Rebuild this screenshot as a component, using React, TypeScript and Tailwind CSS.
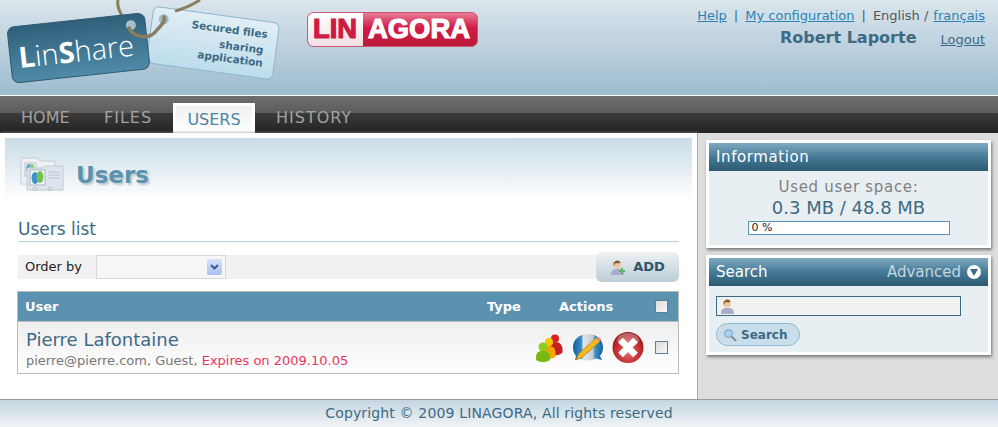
function LogoTags() {
  return (
    <svg width="285" height="95" viewBox="0 0 285 95" className="shrink-0">
      <defs>
        <linearGradient id="tagDark" x1="0" y1="0" x2="0" y2="1">
          <stop offset="0" stopColor="#30607a" />
          <stop offset="1" stopColor="#4f8aa8" />
        </linearGradient>
        <linearGradient id="tagLight" x1="0" y1="0" x2="0" y2="1">
          <stop offset="0" stopColor="#e2eef5" />
          <stop offset="1" stopColor="#bcdcec" />
        </linearGradient>
      </defs>
      <path d="M118 0 C117 6 119 10 122 16" fill="none" stroke="#8a7d60" strokeWidth="3" />
      <g transform="rotate(7.7 213 43)">
        <rect x="149.5" y="14.5" width="127" height="57" rx="6" fill="url(#tagLight)" stroke="#8ab8cf" strokeWidth="1" />
        <circle cx="161" cy="26" r="5" fill="#9db8c6" />
        <g fill="#3d6a84" fontFamily="'DejaVu Sans', sans-serif" fontWeight="700" fontSize="10.5" textAnchor="end">
          <text x="266" y="31">Secured files</text>
          <text x="264" y="47">sharing</text>
          <text x="265" y="60">application</text>
        </g>
      </g>
      <g transform="rotate(-6.2 78.5 48)">
        <rect x="9.5" y="20" width="138" height="56" rx="7" fill="url(#tagDark)" stroke="#2e5a72" strokeWidth="1" />
        <circle cx="133" cy="31" r="5" fill="#a8c0cc" />
        <text x="18" y="61.5" fill="#fff" fontFamily="'Open Sans', sans-serif" fontWeight="300" fontSize="29">
          <tspan fontWeight="700">L</tspan>in<tspan fontWeight="700">S</tspan>hare
        </text>
      </g>
      <path d="M129 28 C134 38 150 40 157 30 C160 26 166 22 164 17" fill="none" stroke="#8a7d60" strokeWidth="3.5" strokeLinecap="round" />
      <path d="M175 11 C183 9 192 5 200 0" fill="none" stroke="#8a7d60" strokeWidth="3" />
    </svg>
  )
}

function LinagoraLogo() {
  return (
    <svg width="171" height="36" viewBox="0 0 171 36">
      <defs>
        <linearGradient id="redBg" x1="0" y1="0" x2="0" y2="1">
          <stop offset="0" stopColor="#ea7d98" />
          <stop offset="0.45" stopColor="#d01c47" />
          <stop offset="1" stopColor="#bb1a3a" />
        </linearGradient>
        <linearGradient id="whiteBg" x1="0" y1="0" x2="0" y2="1">
          <stop offset="0" stopColor="#fff" />
          <stop offset="1" stopColor="#f1dfe4" />
        </linearGradient>
      </defs>
      <rect x="0.5" y="0.5" width="170" height="34" rx="6" fill="url(#redBg)" stroke="#c85a75" />
      <path d="M6.5 1 H56 V34 H6.5 A5.5 5.5 0 0 1 1 28.5 V6.5 A5.5 5.5 0 0 1 6.5 1 Z" fill="url(#whiteBg)" />
      <g fontFamily="'Liberation Sans', sans-serif" fontWeight="700" fontSize="28">
        <text x="6" y="26" fill="#cf1a45" stroke="#cf1a45" strokeWidth="1.2" textLength="44" lengthAdjust="spacingAndGlyphs">LIN</text>
        <text x="61" y="26" fill="#fff" stroke="#fff" strokeWidth="1.2" textLength="102" lengthAdjust="spacingAndGlyphs">AGORA</text>
      </g>
    </svg>
  )
}

function PageIcon() {
  return (
    <svg width="44" height="36" viewBox="0 0 44 36" className="shrink-0">
      <path d="M1 1 H18 L20 4 H35 V27 H1 Z" fill="#eef1f4" stroke="#c5ccd2" />
      <rect x="5" y="6" width="11" height="13" fill="#f4f6f8" stroke="#b4c4d4" />
      <ellipse cx="9" cy="12" rx="3" ry="5" fill="#5f9ed0" />
      <ellipse cx="12" cy="12" rx="2.5" ry="5" fill="#8fcf78" />
      <path d="M7 11 H23 L25 9 H43 V33 H7 Z" fill="#dde5ee" stroke="#c0c8d0" />
      <rect x="10" y="13" width="15" height="15" fill="#f6f8fa" stroke="#aab8c8" />
      <ellipse cx="15" cy="21" rx="3.5" ry="6" fill="#3f8fcf" />
      <ellipse cx="20" cy="20" rx="3.5" ry="6" fill="#74c050" />
      <path d="M28 15 H40 M28 18 H40 M28 21 H40" stroke="#bcc8d4" strokeWidth="1.2" />
      <circle cx="15" cy="32" r="1.6" fill="#eef2f6" stroke="#99a" strokeWidth="0.6" />
      <circle cx="30" cy="32" r="1.6" fill="#eef2f6" stroke="#99a" strokeWidth="0.6" />
    </svg>
  )
}

function PersonIcon({ plus }: { plus?: boolean }) {
  return (
    <svg width="16" height="17" viewBox="0 0 16 17" className="shrink-0">
      <path d="M1 16 C1 11 3 10 7.5 10 C12 10 14 11 14 16 Z" fill="#a9adcb" />
      <circle cx="7" cy="6" r="3.6" fill="#f0c8a0" />
      <path d="M3.5 6 C3 1 10 0 10.5 4 C8 5 6 3.5 5 4.5 C4.6 5 4.5 6 4 7 Z" fill="#8a5a25" />
      {plus && <path d="M12 9 V15 M9 12 H15" stroke="#58b858" strokeWidth="2" />}
    </svg>
  )
}

function GroupIcon() {
  return (
    <svg width="28" height="28" viewBox="0 0 28 28">
      <circle cx="20" cy="4.5" r="4" fill="#d62222" />
      <path d="M15 20 C14 11 16 8 20 8 C25 8 28 11 27.5 18 C27 21 16 23 15 20 Z" fill="#c81e1e" />
      <circle cx="14" cy="8" r="4" fill="#f8c400" />
      <path d="M8 23 C8 14 10 12 14 12 C18 12 21 14 20.5 22 C20 25 9 26 8 23 Z" fill="#f0a800" />
      <circle cx="8" cy="13" r="4.5" fill="#92cc1e" />
      <path d="M1 25 C1 19 2 17 8 17 C13 17 15 19 15 25 C15 29 1 29 1 25 Z" fill="#7ab810" />
    </svg>
  )
}

function EditIcon() {
  return (
    <svg width="30" height="28" viewBox="0 0 30 28">
      <defs>
        <linearGradient id="editBg" x1="0" y1="0" x2="1" y2="0">
          <stop offset="0" stopColor="#0f5f9c" />
          <stop offset="0.28" stopColor="#3d8fc8" />
          <stop offset="0.34" stopColor="#dfe6ec" />
          <stop offset="0.66" stopColor="#c4ccd4" />
          <stop offset="0.74" stopColor="#3d8fc8" />
          <stop offset="1" stopColor="#0f5f9c" />
        </linearGradient>
      </defs>
      <path d="M15 0 C24 0 30 6 30 13 C30 18 28.5 20 27 22 L29 26 L23 24.5 C18 27 12 27 7 24.5 L2 26 L3 22 C1 19 0 17 0 13 C0 6 6 0 15 0 Z" fill="url(#editBg)" />
      <path d="M3 26 L5.5 20 L23 4 L27 7.5 L9 23.5 Z" fill="#f5b81e" stroke="#a87a10" strokeWidth="0.7" />
      <path d="M23 4 L27 7.5 L28 5 L26 3 Z" fill="#e88a8a" />
    </svg>
  )
}

function DeleteIcon() {
  return (
    <svg width="32" height="33" viewBox="0 0 32 33" className="-ml-px">
      <defs>
        <radialGradient id="delBg" cx="0.5" cy="0.62" r="0.6">
          <stop offset="0" stopColor="#e87878" />
          <stop offset="0.7" stopColor="#c02a2c" />
          <stop offset="1" stopColor="#8e1a1c" />
        </radialGradient>
      </defs>
      <circle cx="16" cy="16.5" r="15.5" fill="url(#delBg)" />
      <ellipse cx="16" cy="9" rx="11" ry="7" fill="#fff" opacity="0.3" />
      <path d="M8.5 9 L23.5 24 M23.5 9 L8.5 24" stroke="#fff" strokeWidth="6.5" />
    </svg>
  )
}

function MagnifierIcon() {
  return (
    <svg width="14" height="14" viewBox="0 0 14 14" className="shrink-0">
      <path d="M8 8 L13 13" stroke="#8a8a8a" strokeWidth="2" />
      <circle cx="5.5" cy="5.5" r="4" fill="#a8d0f0" stroke="#7aa0c0" />
    </svg>
  )
}

function Checkbox() {
  return <div className="h-[13px] w-[13px] border border-[#5d7f9b] bg-gradient-to-br from-[#dcdcdc] to-[#f8f8f8]" />
}

function PanelHeader({ children }: { children: React.ReactNode }) {
  return (
    <div className="flex h-[28px] items-center justify-between bg-gradient-to-b from-[#7faac2] via-[#467a96] to-[#2b5a72] px-[7px] text-[15px] leading-none text-white">
      {children}
    </div>
  )
}

export default function App() {
  return (
    <div className="flex h-[427px] w-[998px] flex-col overflow-hidden bg-white font-['DejaVu_Sans',sans-serif]">
      <header className="flex h-[96px] shrink-0 border-b border-white bg-gradient-to-b from-[#dbe5ec] to-[#9dbccf]">
        <LogoTags />
        <div className="ml-[22px] mt-[12px]">
          <LinagoraLogo />
        </div>
        <div className="ml-auto flex flex-col items-end pr-[13px] pt-[7px]">
          <div className="flex gap-[7px] text-[13px] leading-[18px] text-[#505a60]">
            <a className="text-[#2b83b5] underline">Help</a>
            <span className="text-[#2b6f9a]">|</span>
            <a className="text-[#2b83b5] underline">My configuration</a>
            <span>|</span>
            <span>English /</span>
            <a className="-ml-[2px] text-[#2b83b5] underline">français</a>
          </div>
          <div className="mt-[2px] flex items-center gap-[24px]">
            <span className="text-[16px] font-bold leading-[22px] text-[#3d6a84]">Robert Laporte</span>
            <a className="mt-[3px] text-[13px] leading-[18px] text-[#3d6a84] underline">Logout</a>
          </div>
        </div>
      </header>

      <nav className="flex h-[37px] shrink-0 items-end bg-[linear-gradient(#706f6f_0%,#5c5c5c_45%,#3b3b3b_47%,#222322_100%)] text-[16px] text-[#a2a2a2]">
        <a className="ml-[21px] flex h-[30px] w-[83px] items-center">HOME</a>
        <a className="flex h-[30px] w-[69px] items-center tracking-[1px]">FILES</a>
        <a className="flex h-[30px] w-[82px] items-center justify-center border-[3px] border-b-0 border-white bg-gradient-to-b from-[#f0f0f0] to-white text-[#4a85a5]">
          USERS
        </a>
        <a className="ml-[21px] flex h-[30px] items-center tracking-[1px]">HISTORY</a>
      </nav>

      <div className="flex min-h-0 flex-1">
        <main className="w-[698px] shrink-0 border-r border-[#aaa] bg-white px-[5px] pt-[5px] shadow-[1px_0_3px_#888]">
          <div className="flex h-[62px] w-[687px] items-center gap-[12px] bg-gradient-to-b from-[#c9dce6] to-white pl-[15px] pt-[12px]">
            <PageIcon />
            <h1 className="text-[23px] font-bold text-[#5a93b0] [text-shadow:2px_2px_2px_#c0c8cc]">Users</h1>
          </div>
          <div className="ml-[13px] w-[661px]">
            <h2 className="mt-[17px] h-[25px] border-b border-[#b8cfdf] text-[17px] leading-[24px] text-[#3d6a84]">Users list</h2>
            <div className="relative mt-[13px] flex h-[24px] w-[661px] items-center bg-[#f1f1f1] pl-[7px] text-[13px] text-[#222]">
              <span className="w-[71px]">Order by</span>
              <div className="flex h-[24px] w-[130px] items-center justify-end border border-[#d8d8d8] bg-[#f6f6f6] pr-[3px]">
                <span className="flex h-[16px] w-[15px] items-center justify-center rounded-[2px] bg-gradient-to-b from-[#d8e4fa] to-[#a9c0f4]">
                  <svg width="9" height="6" viewBox="0 0 9 6">
                    <path d="M1 1 L4.5 4.5 L8 1" fill="none" stroke="#3c5a8a" strokeWidth="2" />
                  </svg>
                </span>
              </div>
              <button className="absolute -top-[3px] right-0 flex h-[30px] w-[83px] items-center justify-center gap-[7px] rounded-[6px] bg-gradient-to-b from-[#eef1f3] to-[#bccdd8] text-[13px] font-bold text-[#2f566e]">
                <PersonIcon plus />
                ADD
              </button>
            </div>
            <div className="-ml-px mt-[12px] w-[662px] border border-[#bbb] text-[13px]">
              <div className="flex h-[30px] items-center border-b border-[#bbb] bg-[#5a92b0] pl-[7px] font-bold text-white">
                <span className="flex-1">User</span>
                <span className="w-[72px]">Type</span>
                <span className="w-[96px]">Actions</span>
                <span className="w-[23px]"><Checkbox /></span>
              </div>
              <div className="flex h-[51px] items-center bg-gradient-to-b from-[#eee] to-white pl-[8px]">
                <div className="flex-1 pt-[3px]">
                  <div className="text-[18px] leading-[22px] text-[#3d6a84]">Pierre Lafontaine</div>
                  <div className="mt-[1px] text-[13px] leading-[18px] text-[#777]">
                    pierre@pierre.com, Guest, <span className="text-[#f0335c]">Expires on 2009.10.05</span>
                  </div>
                </div>
                <div className="flex w-[109px] items-center gap-[10px]">
                  <GroupIcon />
                  <EditIcon />
                  <DeleteIcon />
                </div>
                <span className="ml-[11px] w-[23px]"><Checkbox /></span>
              </div>
            </div>
          </div>
        </main>

        <aside className="flex flex-1 flex-col gap-[7px] bg-[#dddddd] pl-[8px] pt-[7px]">
          <section className="w-[285px] border-[3px] border-white bg-[#e8eff3] shadow-[1px_2px_3px_#777]">
            <PanelHeader><span className="tracking-[.6px]">Information</span></PanelHeader>
            <div className="flex h-[74px] flex-col items-center pt-[7px]">
              <div className="text-[15px] leading-[18px] tracking-[.7px] text-[#808080]">Used user space:</div>
              <div className="mt-[1px] text-[18px] leading-[21px] text-[#3d6a84]">0.3 MB / 48.8 MB</div>
              <div className="mt-[3px] h-[14px] w-[202px] border border-[#5a92b0] bg-white pl-[3px] text-[11px] leading-[12px] text-[#222]">0 %</div>
            </div>
          </section>
          <section className="w-[285px] border-[3px] border-white bg-[#e8eff3] shadow-[1px_2px_3px_#777]">
            <PanelHeader>
              <span>Search</span>
              <span className="flex items-center gap-[6px] text-[#c4d6e0]">
                Advanced
                <span className="flex h-[14px] w-[14px] items-center justify-center rounded-full bg-white">
                  <svg width="8" height="7" viewBox="0 0 8 7"><path d="M0 0 H8 L4 7 Z" fill="#3d6a84" /></svg>
                </span>
              </span>
            </PanelHeader>
            <div className="h-[66px] px-[7px] pt-[10px]">
              <div className="flex h-[20px] w-[245px] items-center border border-[#3d6a84] bg-[#f1f1f1] pl-[3px]">
                <PersonIcon />
              </div>
              <button className="mt-[7px] flex h-[23px] w-[84px] items-center gap-[4px] rounded-full border border-[#8fb8d0] bg-[#c8dfeb] pl-[6px] text-[12px] font-bold text-[#3d6a84]">
                <MagnifierIcon />
                Search
              </button>
            </div>
          </section>
        </aside>
      </div>

      <footer className="flex h-[28px] shrink-0 items-center justify-center border-t border-[#999] bg-gradient-to-b from-[#c5d5e0] to-[#f0f4f6] text-[14px] tracking-[.15px] text-[#3d6a84]">
        Copyright © 2009 LINAGORA, All rights reserved
      </footer>
    </div>
  )
}
